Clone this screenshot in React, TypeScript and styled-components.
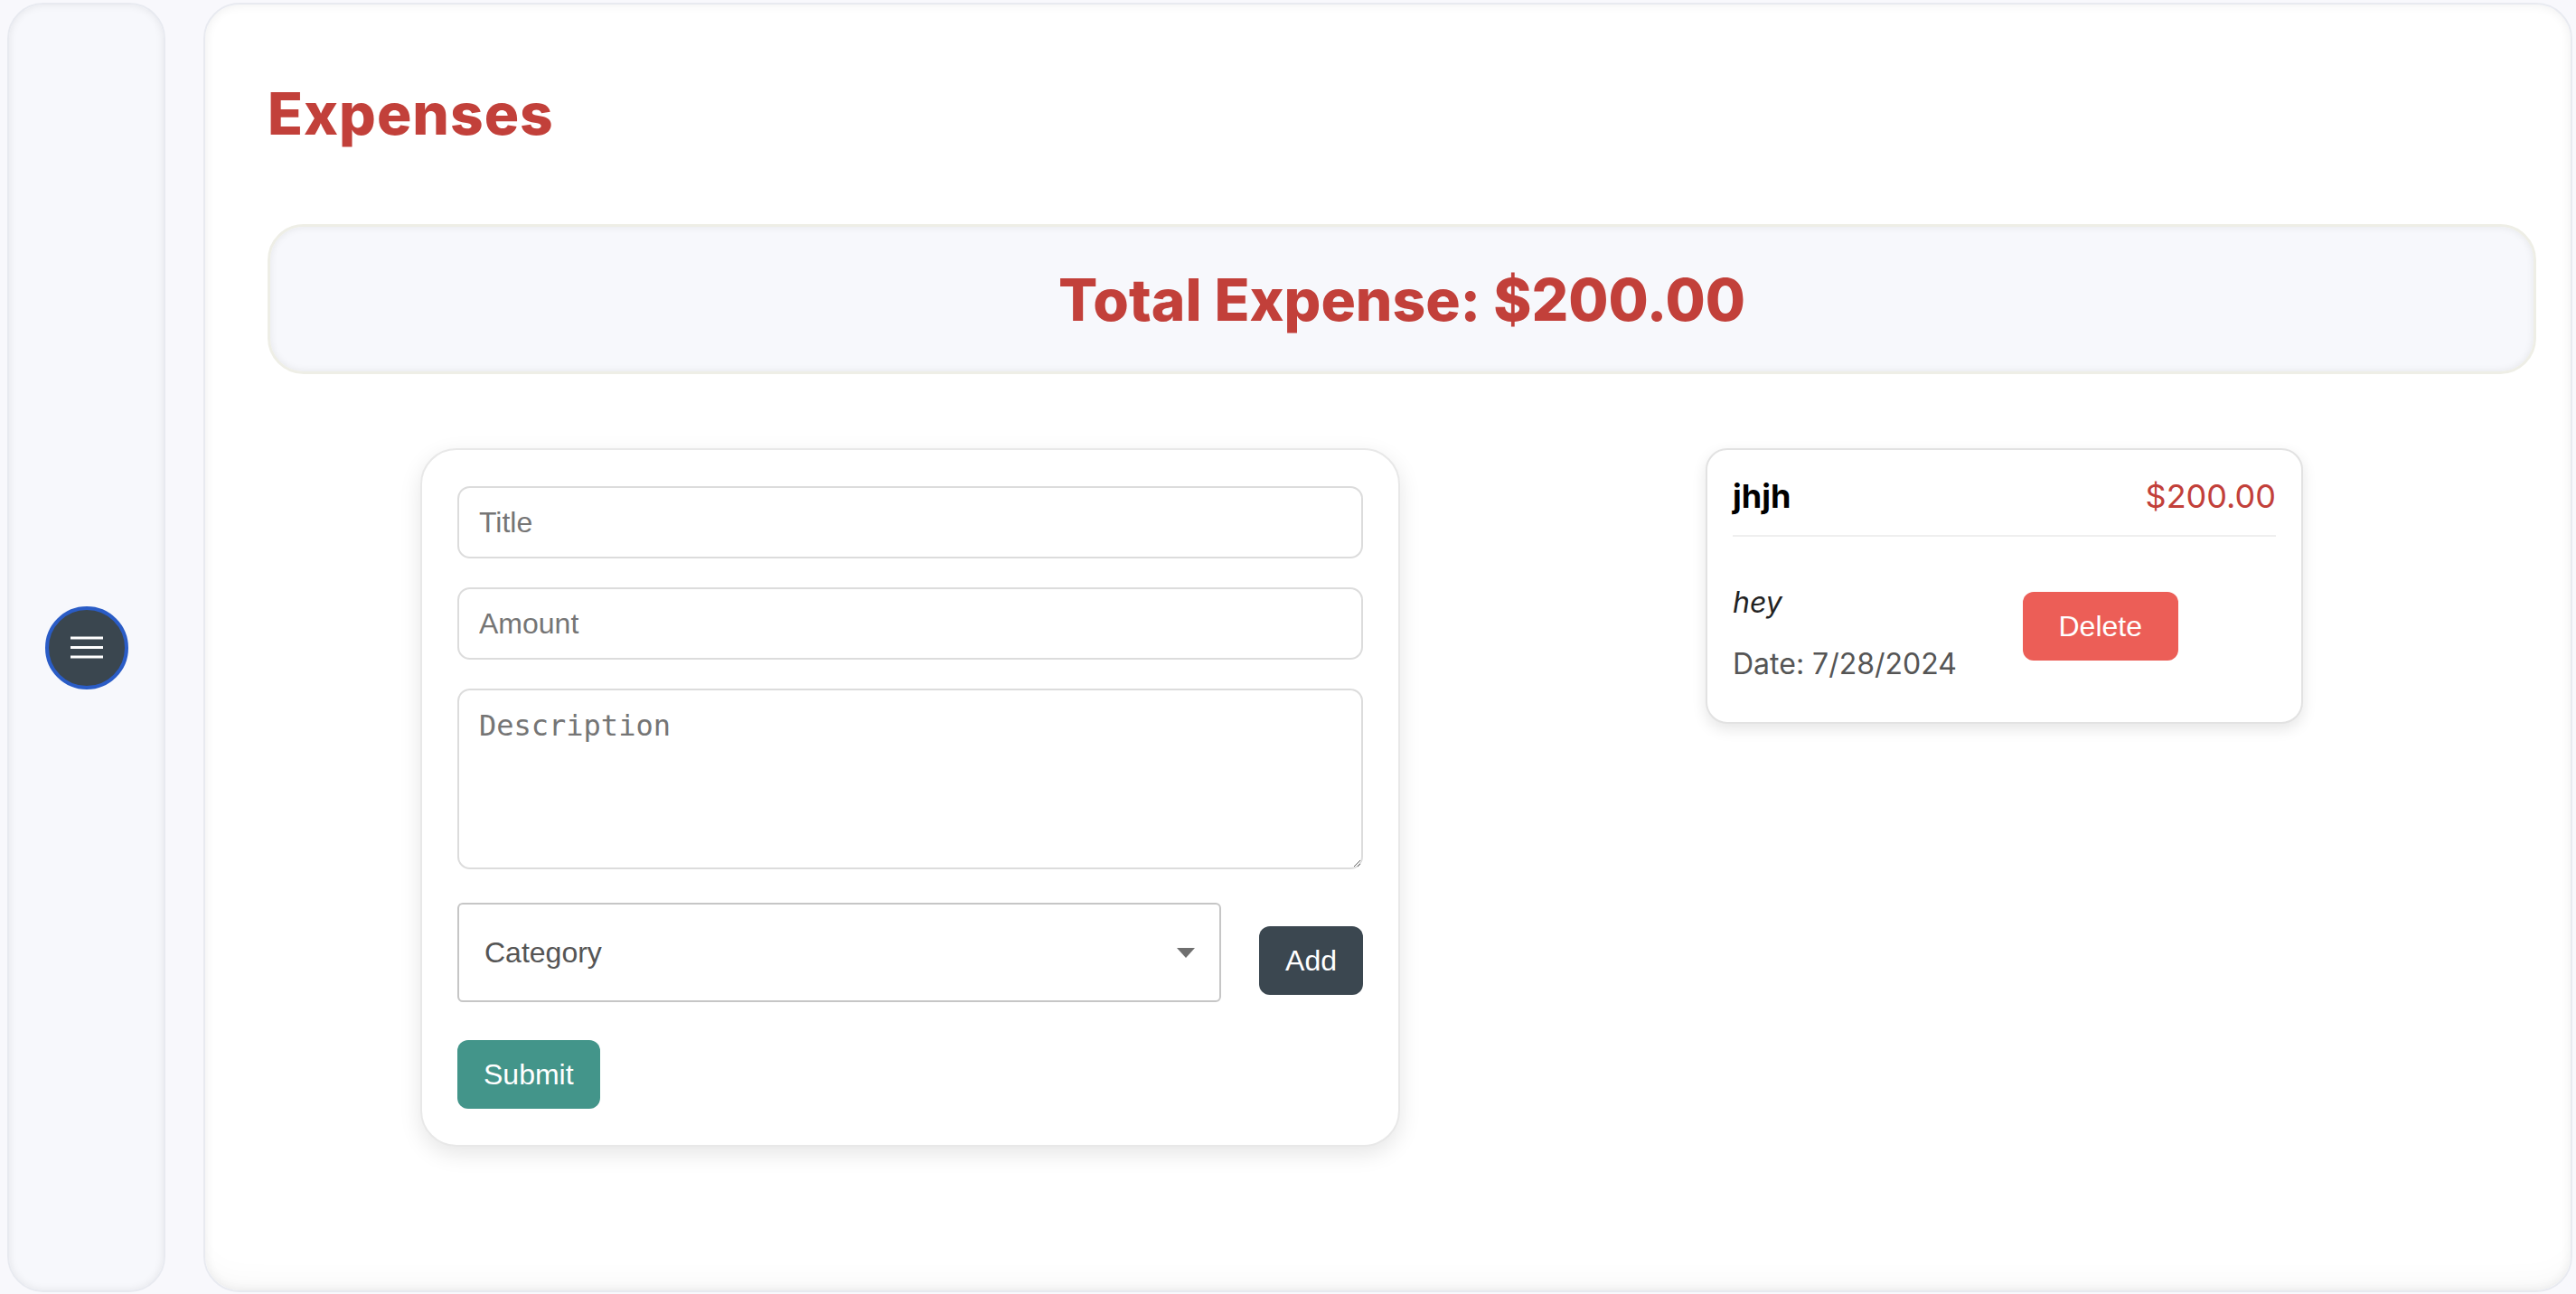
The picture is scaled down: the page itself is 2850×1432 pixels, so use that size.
import React from 'react';
import styled, { createGlobalStyle } from 'styled-components';

const GlobalStyle = createGlobalStyle`
  * {
    box-sizing: border-box;
  }

  html,
  body {
    margin: 0;
    padding: 0;
    background-color: #f8f8fc;
    font-family: Inter, 'Liberation Sans', sans-serif;
  }
`;

const Layout = styled.div`
  display: flex;
  gap: 42px;
  height: 100vh;
  padding: 3px 4px 2px 8px;
`;

const Sidebar = styled.aside`
  width: 175px;
  flex-shrink: 0;
  display: flex;
  align-items: center;
  justify-content: center;
  border: 2px solid #e8eaf0;
  border-radius: 40px;
  background-color: #f7f8fc;
  box-shadow: inset 0 0 10px rgba(0, 0, 0, 0.08);
`;

const MenuButton = styled.button`
  width: 92px;
  height: 92px;
  display: flex;
  align-items: center;
  justify-content: center;
  padding: 0;
  border: 4px solid #2a5cc6;
  border-radius: 50%;
  background-color: #3a464f;
  cursor: pointer;
`;

const Main = styled.main`
  flex: 1;
  min-width: 0;
  padding: 82px 38px 0 69px;
  border: 2px solid #e8eaf0;
  border-radius: 40px;
  background-color: #fff;
  box-shadow: inset 0 0 12px rgba(0, 0, 0, 0.07), inset 0 -30px 40px -30px rgba(0, 0, 0, 0.05);
  overflow: hidden;
`;

const Title = styled.h1`
  margin: 0;
  font-size: 64px;
  line-height: 77px;
  font-weight: 800;
  letter-spacing: 1px;
  color: #c2403a;
`;

const TotalBox = styled.div`
  height: 166px;
  margin-top: 84px;
  display: flex;
  align-items: center;
  justify-content: center;
  border: 3px solid #eeeee6;
  border-radius: 40px;
  background-color: #f7f8fc;
  box-shadow: inset 0 0 8px rgba(0, 0, 0, 0.08);
`;

const TotalText = styled.h2`
  margin: 0;
  font-size: 64px;
  font-weight: 800;
  color: #c2403a;
`;

const Content = styled.div`
  display: flex;
  align-items: flex-start;
  gap: 338px;
  margin-top: 82px;
  padding-left: 169px;
`;

const FormCard = styled.form`
  width: 1084px;
  display: flex;
  flex-direction: column;
  gap: 32px;
  padding: 40px 39px;
  border: 2px solid #e8e8e8;
  border-radius: 40px;
  background-color: #fff;
  box-shadow: 0 8px 24px rgba(0, 0, 0, 0.1);
`;

const fieldBase = `
  width: 100%;
  border: 2px solid #dcdcdc;
  border-radius: 14px;
  font-size: 32px;
  color: #222;
  background-color: #fff;
  outline: none;

  &::placeholder {
    color: #757575;
  }
`;

const TextInput = styled.input`
  ${fieldBase}
  height: 80px;
  padding: 0 22px;
  font-family: 'Liberation Sans', Arial, sans-serif;
`;

const TextArea = styled.textarea`
  ${fieldBase}
  display: block;
  height: 200px;
  padding: 20px 22px;
  font-family: 'DejaVu Sans Mono', 'Liberation Mono', monospace;
  resize: vertical;
`;

const CategoryRow = styled.div`
  display: flex;
  align-items: center;
  gap: 42px;
  margin-top: 5px;
`;

const SelectBox = styled.div`
  flex: 1;
  height: 110px;
  display: flex;
  align-items: center;
  justify-content: space-between;
  padding: 0 27px 0 28px;
  border: 2px solid #c6c6c6;
  border-radius: 6px;
  font-family: 'Liberation Sans', Arial, sans-serif;
  font-size: 32px;
  color: #555;
  cursor: pointer;
`;

const Button = styled.button<{ $bg: string; $padX: number }>`
  padding: 20px ${(props) => props.$padX}px;
  border: none;
  border-radius: 12px;
  background-color: ${(props) => props.$bg};
  color: #fff;
  font-family: 'Liberation Sans', Arial, sans-serif;
  font-size: 32px;
  line-height: 36px;
  cursor: pointer;
`;

const AddButton = styled(Button)`
  margin-top: 18px;
`;

const SubmitButton = styled(Button)`
  align-self: flex-start;
  margin-top: 10px;
`;

const ExpenseCard = styled.div`
  width: 661px;
  padding: 28px 28px 45px;
  border: 2px solid #e2e2e2;
  border-radius: 24px;
  background-color: #fff;
  box-shadow: 0 6px 16px rgba(0, 0, 0, 0.1);
`;

const ExpenseHeader = styled.div`
  display: flex;
  align-items: center;
  justify-content: space-between;
  padding-bottom: 20px;
  border-bottom: 2px solid #efefef;
  line-height: 46px;
`;

const ExpenseTitle = styled.span`
  font-size: 36px;
  font-weight: 700;
  color: #000;
`;

const ExpenseAmount = styled.span`
  font-size: 36px;
  color: #c2403a;
`;

const ExpenseBody = styled.div`
  display: grid;
  grid-template-columns: 1fr 1fr;
  column-gap: 40px;
  align-items: start;
  padding-top: 53px;
`;

const ExpenseInfo = styled.div`
  display: flex;
  flex-direction: column;
  gap: 29px;
  line-height: 39px;
`;

const Description = styled.span`
  font-size: 32px;
  font-style: italic;
  color: #222;
`;

const DateText = styled.span`
  font-size: 32px;
  color: #555;
`;

const DeleteButton = styled(Button)`
  justify-self: start;
  margin-top: 8px;
`;

const MenuIcon: React.FC = () => (
  <svg width="36" height="26" viewBox="0 0 36 26" fill="none">
    <line x1="0" y1="2" x2="36" y2="2" stroke="#fff" strokeWidth="3" strokeLinecap="round" />
    <line x1="0" y1="12.5" x2="36" y2="12.5" stroke="#fff" strokeWidth="3" strokeLinecap="round" />
    <line x1="0" y1="23" x2="36" y2="23" stroke="#fff" strokeWidth="3" strokeLinecap="round" />
  </svg>
);

const CaretIcon: React.FC = () => (
  <svg width="20" height="11" viewBox="0 0 20 11">
    <polygon points="0,0 20,0 10,11" fill="#6f6f6f" />
  </svg>
);

const App: React.FC = () => {
  return (
    <>
      <GlobalStyle />
      <Layout>
        <Sidebar>
          <MenuButton aria-label="Open menu">
            <MenuIcon />
          </MenuButton>
        </Sidebar>
        <Main>
          <Title>Expenses</Title>
          <TotalBox>
            <TotalText>Total Expense: $200.00</TotalText>
          </TotalBox>
          <Content>
            <FormCard onSubmit={(e) => e.preventDefault()}>
              <TextInput type="text" placeholder="Title" />
              <TextInput type="text" placeholder="Amount" />
              <TextArea placeholder="Description" />
              <CategoryRow>
                <SelectBox>
                  <span>Category</span>
                  <CaretIcon />
                </SelectBox>
                <AddButton type="button" $bg="#3b4750" $padX={29}>
                  Add
                </AddButton>
              </CategoryRow>
              <SubmitButton type="submit" $bg="#43958a" $padX={29}>
                Submit
              </SubmitButton>
            </FormCard>
            <ExpenseCard>
              <ExpenseHeader>
                <ExpenseTitle>jhjh</ExpenseTitle>
                <ExpenseAmount>$200.00</ExpenseAmount>
              </ExpenseHeader>
              <ExpenseBody>
                <ExpenseInfo>
                  <Description>hey</Description>
                  <DateText>Date: 7/28/2024</DateText>
                </ExpenseInfo>
                <DeleteButton type="button" $bg="#ec5e57" $padX={40}>
                  Delete
                </DeleteButton>
              </ExpenseBody>
            </ExpenseCard>
          </Content>
        </Main>
      </Layout>
    </>
  );
};

export default App;
